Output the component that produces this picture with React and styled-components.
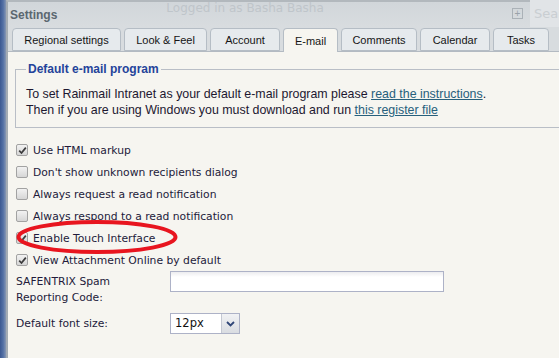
import React from "react";
import styled, { createGlobalStyle } from "styled-components";

const GlobalStyle = createGlobalStyle`
  html, body {
    margin: 0;
    padding: 0;
  }
  body {
    width: 559px;
    height: 358px;
    overflow: hidden;
    background: #f6f5f0;
    font-family: "Liberation Sans", Arial, sans-serif;
  }
`;

const Screen = styled.div`
  position: relative;
  display: flex;
  width: 559px;
  height: 358px;
  overflow: hidden;
`;

const SideStrip = styled.div`
  flex: none;
  width: 6px;
  background: linear-gradient(90deg, #3b5891 0%, #5572a6 55%, #8797b3 100%);
`;

const Window = styled.div`
  flex: 1;
  min-width: 0;
  display: flex;
  flex-direction: column;
  border-left: 2px solid #a3abb3;
  border-top: 2px solid #b2b8bd;
  background: #f6f5f0;
`;

const Header = styled.div`
  display: flex;
  align-items: flex-start;
  height: 25px;
  background: linear-gradient(#d1d6da, #d8dcdf);
`;

const Title = styled.div`
  margin: 6px 0 0 2px;
  font-weight: bold;
  font-size: 12px;
  line-height: 14px;
  color: #5b6770;
`;

const LoggedIn = styled.div`
  margin: 0 0 0 109px;
  font-family: "DejaVu Sans", Verdana, sans-serif;
  font-size: 12px;
  line-height: 13px;
  color: #bfc5ca;
  white-space: nowrap;
`;

const Spacer = styled.div`
  flex: 1;
`;

const PlusBox = styled.div`
  margin: 6px 7px 0 0;
  width: 9px;
  height: 9px;
  border: 1px solid #aab1b7;
  display: flex;
  align-items: center;
  justify-content: center;
  font-size: 10px;
  line-height: 9px;
  color: #9aa2a9;
`;

const SearchBox = styled.div`
  margin-top: -2px;
  width: 29px;
  height: 27px;
  background: #e1e4e7;
  padding: 6px 0 0 4px;
  box-sizing: border-box;
  font-family: "DejaVu Sans", Verdana, sans-serif;
  font-size: 13px;
  color: #c9ced2;
  overflow: hidden;
  white-space: nowrap;
`;

const TabBar = styled.div`
  display: flex;
  align-items: flex-end;
  gap: 3px;
  height: 25px;
  padding-left: 4px;
  box-sizing: border-box;
  border-bottom: 1px solid #b3bac2;
  background: #d8dcdf;
`;

const Tab = styled.div`
  flex: none;
  width: ${(p) => p.$w}px;
  height: ${(p) => (p.$active ? 24 : 23)}px;
  margin-bottom: ${(p) => (p.$active ? -1 : 0)}px;
  box-sizing: border-box;
  display: flex;
  align-items: center;
  justify-content: center;
  border: 1px solid #b5bdc5;
  border-bottom: ${(p) => (p.$active ? "none" : "1px solid #b5bdc5")};
  border-radius: 4px 4px 0 0;
  background: ${(p) => (p.$active ? "#f6f5f0" : "#e6eaed")};
  font-size: 11px;
  color: #151515;
  padding-top: ${(p) => (p.$active ? 1 : 0)}px;
`;

const Content = styled.div`
  flex: 1;
  padding: 10px 0 0 8px;
  background: #f6f5f0;
`;

const Fieldset = styled.fieldset`
  margin: 0 0 0 -1px;
  width: 600px;
  padding: 0 0 9px 10px;
  border: 1px solid #b9bec6;
  box-sizing: border-box;
`;

const Legend = styled.legend`
  padding: 0 2px;
  font-weight: bold;
  font-size: 12px;
  line-height: 14px;
  color: #24439a;
`;

const Para = styled.p`
  margin: 10px 0 0 0;
  font-size: 12.4px;
  line-height: 16px;
  color: #1d1830;
`;

const Link = styled.a`
  color: #27607c;
  text-decoration: underline;
`;

const CheckList = styled.div`
  margin-top: 11px;
  display: flex;
  flex-direction: column;
`;

const CheckRow = styled.label`
  display: flex;
  align-items: center;
  gap: 5px;
  height: 22px;
  font-family: "DejaVu Sans", Verdana, sans-serif;
  font-size: 10.75px;
  color: #221a3a;
`;

const Box = styled.span`
  flex: none;
  width: 12px;
  height: 12px;
  box-sizing: border-box;
  border: 1px solid #a2a2a2;
  border-radius: 2px;
  background: linear-gradient(#f2f2f2, #d6d6d6);
  display: flex;
  align-items: center;
  justify-content: center;
`;

const FormGrid = styled.div`
  display: grid;
  grid-template-columns: 154px 274px;
  row-gap: 7px;
  font-family: "DejaVu Sans", Verdana, sans-serif;
  font-size: 10.75px;
  color: #221a3a;
`;

const FieldLabel = styled.div`
  padding-top: 3px;
  line-height: 16px;
`;

const TextInput = styled.div`
  height: 21px;
  box-sizing: border-box;
  border: 1px solid #adb2c7;
  background: linear-gradient(#ececef 0px, #ffffff 5px, #ffffff 100%);
`;

const Select = styled.div`
  display: flex;
  width: 70px;
  height: 21px;
  box-sizing: border-box;
  border: 1px solid #adb2c7;
  background: #ffffff;
`;

const SelectValue = styled.div`
  flex: 1;
  padding-left: 4px;
  line-height: 19px;
  font-size: 11.5px;
  color: #111;
`;

const SelectButton = styled.div`
  width: 17px;
  border-left: 1px solid #c4c8d2;
  background: linear-gradient(#f1f2f4, #d9dce1);
  display: flex;
  align-items: center;
  justify-content: center;
`;

const Ellipse = styled.svg`
  position: absolute;
  left: 0;
  top: 0;
  pointer-events: none;
`;

const tabs = [
  { label: "Regional settings", w: 109 },
  { label: "Look & Feel", w: 83 },
  { label: "Account", w: 70 },
  { label: "E-mail", w: 55, active: true },
  { label: "Comments", w: 76 },
  { label: "Calendar", w: 70 },
  { label: "Tasks", w: 56 },
];

const options = [
  { label: "Use HTML markup", checked: true },
  { label: "Don't show unknown recipients dialog" },
  { label: "Always request a read notification" },
  { label: "Always respond to a read notification" },
  { label: "Enable Touch Interface", checked: true },
  { label: "View Attachment Online by default", checked: true },
];

const Check = ({ checked }) => (
  <Box>
    {checked && (
      <svg width="9" height="9" viewBox="0 0 9 9">
        <path d="M1.2 4.6 L3.5 7 L7.8 1.6" fill="none" stroke="#3c3c3c" strokeWidth="1.7" />
      </svg>
    )}
  </Box>
);

export default function App() {
  return (
    <Screen>
      <GlobalStyle />
      <SideStrip />
      <Window>
        <Header>
          <Title>Settings</Title>
          <LoggedIn>Logged in as Basha Basha</LoggedIn>
          <Spacer />
          <PlusBox>+</PlusBox>
          <SearchBox>Search</SearchBox>
        </Header>
        <TabBar>
          {tabs.map((t) => (
            <Tab key={t.label} $w={t.w} $active={t.active}>
              {t.label}
            </Tab>
          ))}
        </TabBar>
        <Content>
          <Fieldset>
            <Legend>Default e-mail program</Legend>
            <Para>
              To set Rainmail Intranet as your default e-mail program please{" "}
              <Link>read the instructions</Link>.
              <br />
              Then if you are using Windows you must download and run{" "}
              <Link>this register file</Link>
            </Para>
          </Fieldset>
          <CheckList>
            {options.map((o) => (
              <CheckRow key={o.label}>
                <Check checked={o.checked} />
                {o.label}
              </CheckRow>
            ))}
          </CheckList>
          <FormGrid>
            <FieldLabel>
              SAFENTRIX Spam
              <br />
              Reporting Code:
            </FieldLabel>
            <div>
              <TextInput />
            </div>
            <FieldLabel>Default font size:</FieldLabel>
            <div>
              <Select>
                <SelectValue>12px</SelectValue>
                <SelectButton>
                  <svg width="9" height="6" viewBox="0 0 9 6">
                    <path d="M1 1 L4.5 4.5 L8 1" fill="none" stroke="#2f4677" strokeWidth="1.8" />
                  </svg>
                </SelectButton>
              </Select>
            </div>
          </FormGrid>
        </Content>
      </Window>
      <Ellipse width="559" height="358">
        <ellipse cx="97" cy="237" rx="78.5" ry="15" fill="none" stroke="#e8151f" strokeWidth="4" />
      </Ellipse>
    </Screen>
  );
}
